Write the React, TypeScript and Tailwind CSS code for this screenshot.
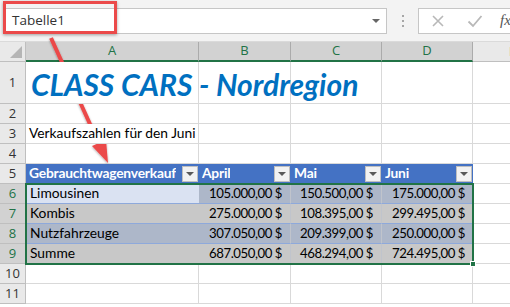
import React from "react";

const GRID = "border-[#D9D9D9]";

const COL_W = [173, 92, 91, 91, 80];
const LETTERS = ["A", "B", "C", "D", "E"];

type Row = { label: string; values: string[] };

const DATA: Row[] = [
  { label: "Limousinen", values: ["105.000,00 $", "150.500,00 $", "175.000,00 $"] },
  { label: "Kombis", values: ["275.000,00 $", "108.395,00 $", "299.495,00 $"] },
  { label: "Nutzfahrzeuge", values: ["307.050,00 $", "209.399,00 $", "250.000,00 $"] },
  { label: "Summe", values: ["687.050,00 $", "468.294,00 $", "724.495,00 $"] },
];

// banded rows, darkened by the selection (A6 is the active cell)
const BAND = ["bg-[#ADB7C9]", "bg-[#C8C8C8]", "bg-[#ADB7C9]", "bg-[#C8C8C8]"];

function RowHead({ n, h, sel }: { n: number; h: string; sel?: boolean }) {
  return (
    <div
      style={{ fontFamily: "'Open Sans', sans-serif" }}
      className={`${h} w-[26px] shrink-0 flex items-center justify-center border-r border-b border-[#BFBFBF] text-[13px] ${
        sel ? "bg-[#D2D2D2] text-[#217346]" : "bg-[#E9E9E9] text-[#333]"
      }`}
    >
      {n}
    </div>
  );
}

function Cell({
  w,
  h,
  className = "",
  children,
}: {
  w: number;
  h: string;
  className?: string;
  children?: React.ReactNode;
}) {
  return (
    <div
      style={{ width: w }}
      className={`${h} shrink-0 border-r border-b ${GRID} flex items-center whitespace-nowrap ${className}`}
    >
      {children}
    </div>
  );
}

function EmptyRow({ n, h = "h-[20px]", children }: { n: number; h?: string; children?: React.ReactNode }) {
  return (
    <div className="flex">
      <RowHead n={n} h={h} />
      {children ?? COL_W.map((w, i) => <Cell key={i} w={w} h={h} className="bg-white" />)}
    </div>
  );
}

function FilterBtn() {
  return (
    <div className="ml-auto mr-[1px] w-[16px] h-[16px] shrink-0 bg-[#F2F2F2] border border-[#BFBFBF] flex items-center justify-center">
      <div className="w-0 h-0 border-l-[4px] border-r-[4px] border-t-[4px] border-l-transparent border-r-transparent border-t-[#595959]" />
    </div>
  );
}

export default function App() {
  return (
    <div
      className="relative w-[510px] h-[307px] overflow-hidden bg-white text-black"
      style={{ fontFamily: "Lato, 'Open Sans', sans-serif" }}
    >
      {/* formula bar */}
      <div className="h-[42px] bg-[#F3F3F3] flex items-center border-b border-[#DADADA]">
        <div
          className="ml-[3px] w-[384px] h-[26px] bg-white border border-[#C6C6C6] flex items-center pl-[8px] pr-[6px] text-[13.5px] text-[#333]"
          style={{ fontFamily: "'Open Sans', sans-serif" }}
        >
          Tabelle1
          <div className="ml-auto w-0 h-0 border-l-[4px] border-r-[4px] border-t-[4px] border-l-transparent border-r-transparent border-t-[#666]" />
        </div>
        <div className="w-[31px] flex flex-col items-center gap-[3px]">
          <span className="w-[2px] h-[2px] bg-[#A6A6A6]" />
          <span className="w-[2px] h-[2px] bg-[#A6A6A6]" />
          <span className="w-[2px] h-[2px] bg-[#A6A6A6]" />
        </div>
        <div className="flex-1 h-[26px] bg-white border border-[#C6C6C6] border-r-0 flex items-center overflow-hidden">
          <svg width="14" height="14" viewBox="0 0 14 14" className="ml-[12px] shrink-0">
            <path d="M2 2 L12 12 M12 2 L2 12" stroke="#B8B8B8" strokeWidth="1.6" />
          </svg>
          <svg width="16" height="14" viewBox="0 0 16 14" className="ml-[22px] shrink-0">
            <path d="M1.5 7.5 L6 12 L14.5 2" stroke="#B8B8B8" strokeWidth="1.8" fill="none" />
          </svg>
          <span
            className="ml-[17px] italic text-[15px] text-[#555] shrink-0"
            style={{ fontFamily: "'Liberation Serif', serif" }}
          >
            fx
          </span>
        </div>
      </div>

      {/* column headers */}
      <div className="flex h-[20px]">
        <div className="w-[26px] shrink-0 h-[20px] bg-[#E9E9E9] border-r border-b border-[#BFBFBF] relative">
          <svg width="12" height="12" className="absolute right-[3px] bottom-[3px]">
            <path d="M12 0 L12 12 L0 12 Z" fill="#B5B5B5" />
          </svg>
        </div>
        {COL_W.map((w, i) => (
          <div
            key={i}
            style={{ width: w, fontFamily: "'Open Sans', sans-serif" }}
            className={`shrink-0 h-[20px] flex items-center justify-center text-[13px] border-r ${
              i < 4
                ? "bg-[#D2D2D2] text-[#217346] border-[#ABABAB] border-b-2 border-b-[#217346]"
                : "bg-[#E9E9E9] text-black border-[#BFBFBF] border-b border-b-[#BFBFBF]"
            }`}
          >
            {LETTERS[i]}
          </div>
        ))}
      </div>

      {/* row 1 */}
      <EmptyRow n={1} h="h-[42px]">
        <Cell w={COL_W[0]} h="h-[42px]" className="bg-white pl-[5px] z-10">
          <span className="text-[30px] font-bold italic text-[#0070C0] pt-[4px]">
            CLASS CARS - Nordregion
          </span>
        </Cell>
        <Cell w={COL_W[1]} h="h-[42px]" className="bg-white" />
        <Cell w={COL_W[2]} h="h-[42px]" className="bg-white" />
        <Cell w={COL_W[3]} h="h-[42px]" className="bg-white" />
        <Cell w={COL_W[4]} h="h-[42px]" className="bg-white" />
      </EmptyRow>
      <EmptyRow n={2} />
      <EmptyRow n={3}>
        <Cell w={COL_W[0]} h="h-[20px]" className="bg-white pl-[3px] text-[13.8px] z-10">
          Verkaufszahlen für den Juni
        </Cell>
        {COL_W.slice(1).map((w, i) => (
          <Cell key={i} w={w} h="h-[20px]" className="bg-white" />
        ))}
      </EmptyRow>
      <EmptyRow n={4} />

      {/* table header */}
      <div className="flex">
        <RowHead n={5} h="h-[20px]" />
        {["Gebrauchtwagenverkauf", "April", "Mai", "Juni"].map((t, i) => (
          <div
            key={t}
            style={{ width: COL_W[i] }}
            className="shrink-0 h-[20px] bg-[#4472C4] border-b border-[#8EA9DB] flex items-center pl-[3px] text-white font-bold text-[13.8px] tracking-[-0.2px] whitespace-nowrap overflow-hidden"
          >
            <span className="overflow-hidden">{t}</span>
            <FilterBtn />
          </div>
        ))}
        <Cell w={COL_W[4]} h="h-[20px]" className="bg-white" />
      </div>

      {/* table body */}
      {DATA.map((r, ri) => (
        <div key={r.label} className="flex">
          <RowHead n={6 + ri} h="h-[20px]" sel />
          <div
            style={{ width: COL_W[0] }}
            className={`shrink-0 h-[20px] flex items-center pl-[4px] text-[13.8px] border-b border-[#8EA9DB] whitespace-nowrap ${
              ri === 0 ? "bg-[#DAE2F2]" : BAND[ri]
            }`}
          >
            {r.label}
          </div>
          {r.values.map((v, vi) => (
            <div
              key={vi}
              style={{ width: COL_W[vi + 1] }}
              className={`shrink-0 h-[20px] flex items-center justify-end pr-[8px] text-[13.2px] tracking-[-0.45px] border-b border-[#8EA9DB] whitespace-nowrap ${
                vi < 2 ? "border-r border-r-[#C0C4CC]" : ""
              } ${BAND[ri]}`}
            >
              {v}
            </div>
          ))}
          <Cell w={COL_W[4]} h="h-[20px]" className="bg-white" />
        </div>
      ))}
      <EmptyRow n={10} />
      <EmptyRow n={11} />

      {/* selection outline */}
      <div className="absolute left-[25px] top-[183px] w-[449px] h-[82px] border-2 border-[#217346] pointer-events-none" />
      <div className="absolute left-[470px] top-[261px] w-[6px] h-[6px] bg-[#217346] border border-white" />

      {/* annotation: red frame + arrow */}
      <div className="absolute left-[3px] top-[1px] w-[114px] h-[33px] border-[3px] border-[#EB4A4A] shadow-[0_1px_3px_rgba(0,0,0,0.35)]" />
      <svg className="absolute left-0 top-0 pointer-events-none" width="510" height="307">
        <defs>
          <filter id="sh" x="-20%" y="-20%" width="140%" height="140%">
            <feDropShadow dx="0" dy="1" stdDeviation="1" floodOpacity="0.35" />
          </filter>
        </defs>
        <g filter="url(#sh)">
          <line x1="51" y1="38" x2="99" y2="144" stroke="#EB4A4A" strokeWidth="4" />
          <path d="M108 163 L92 146 L106 140 Z" fill="#EB4A4A" />
        </g>
      </svg>
    </div>
  );
}
